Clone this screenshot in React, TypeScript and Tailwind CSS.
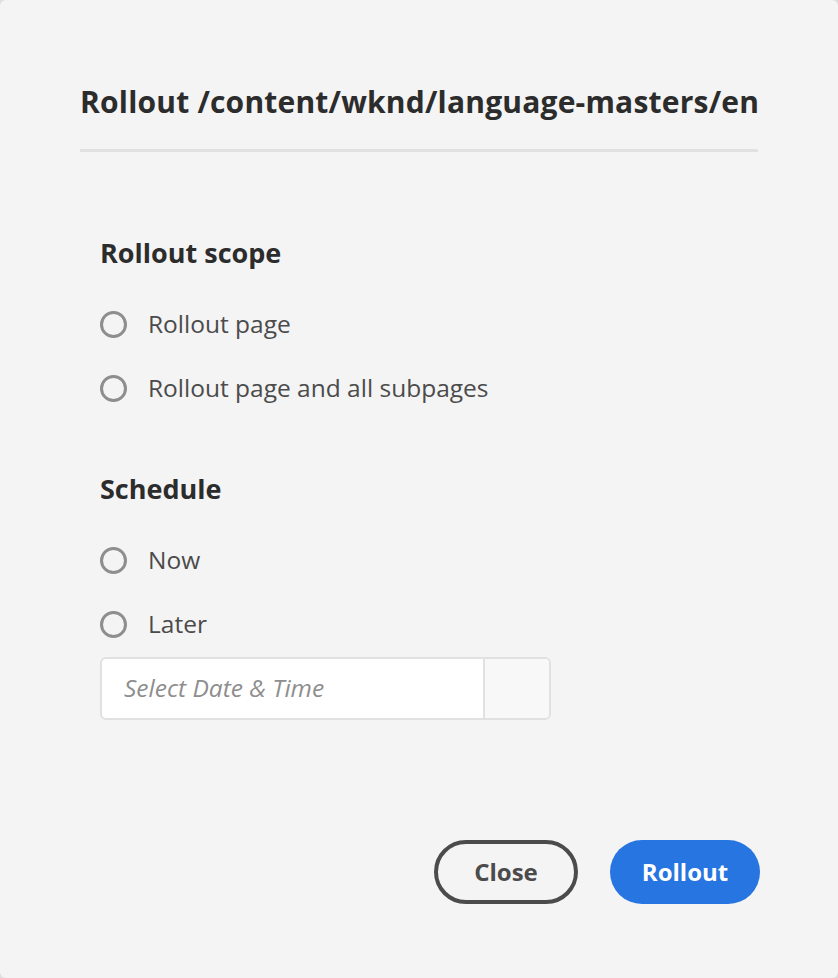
import React from "react";

const FONT = { fontFamily: "'Open Sans', Lato, Arial, sans-serif" };

function Radio({ label }: { label: string }) {
  return (
    <label className="flex h-[64px] items-center gap-[21px]">
      <span className="h-[27px] w-[27px] shrink-0 rounded-full border-[3px] border-[#8e8e8e] bg-[#f4f4f4]" />
      <span className="text-[24.5px] leading-[30px] text-[#4b4b4b]">{label}</span>
    </label>
  );
}

export default function App() {
  return (
    <div className="h-[978px] w-[838px] bg-[#dedede]" style={FONT}>
      <div className="flex h-full w-full flex-col rounded-[6px] bg-[#f4f4f4]">
        <div className="px-[80px] pt-[84px]">
          <h1 className="whitespace-nowrap text-[30px] font-bold leading-[36px] tracking-[0.2px] text-[#2c2c2c]">
            Rollout /content/wknd/language-masters/en
          </h1>
          <div className="mt-[29px] h-[3px] bg-[#e1e1e1]" />
        </div>

        <div className="px-[100px] pt-[86px]">
          <h2 className="text-[27px] font-bold leading-[30px] text-[#2c2c2c]">
            Rollout scope
          </h2>
          <div className="mt-[24px]">
            <Radio label="Rollout page" />
            <Radio label="Rollout page and all subpages" />
          </div>

          <h2 className="mt-[54px] text-[27px] font-bold leading-[30px] text-[#2c2c2c]">
            Schedule
          </h2>
          <div className="mt-[24px]">
            <Radio label="Now" />
            <Radio label="Later" />
          </div>

          <div className="mt-[1px] flex h-[63px] w-[451px] overflow-hidden rounded-[6px] border-2 border-[#e1e1e1] bg-white">
            <div className="flex flex-1 items-center pl-[22px] text-[24.5px] italic text-[#8e8e8e]">
              Select Date &amp; Time
            </div>
            <div className="w-[66px] border-l-2 border-[#e1e1e1] bg-[#f8f8f8]" />
          </div>
        </div>

        <div className="mt-auto flex justify-end gap-[32px] px-[78px] pb-[74px]">
          <button className="h-[64px] w-[144px] rounded-full border-[4px] border-[#4b4b4b] text-[24px] font-bold text-[#4b4b4b]">
            Close
          </button>
          <button className="h-[64px] w-[150px] rounded-full bg-[#2775e0] text-[24px] font-bold text-white">
            Rollout
          </button>
        </div>
      </div>
    </div>
  );
}
